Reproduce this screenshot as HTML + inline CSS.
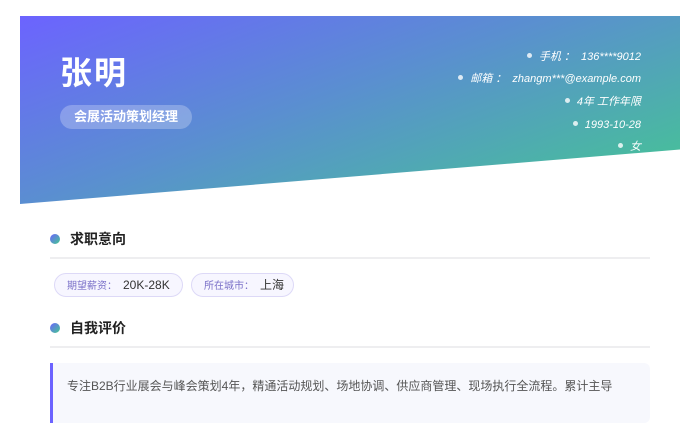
<!DOCTYPE html>
<html><head><meta charset="utf-8"><style>
*{margin:0;padding:0;box-sizing:border-box}
body{width:700px;height:400px;background:#fff;overflow:hidden;position:relative;font-family:"Liberation Sans","Noto Sans CJK SC",sans-serif}
.hd{position:absolute;left:20px;top:16px;width:660px;height:188px;background:linear-gradient(160deg,#6c63ff 0%,#5a8fd0 45%,#43c98f 100%);clip-path:polygon(0 0,100% 0,100% 71%,0 100%)}
.name{position:absolute;left:60px;top:53px;font-size:32px;font-weight:bold;color:#fff;letter-spacing:2px;line-height:40px}
.badge{position:absolute;left:60px;top:105px;width:132px;height:24px;border-radius:12px;background:rgba(255,255,255,.25);color:#fff;font-size:13px;font-weight:bold;line-height:24px;text-align:center}
.ct{position:absolute;right:59px;font-size:11px;font-style:italic;color:#fff;line-height:14px;text-align:right;white-space:nowrap}
.ct:before{content:"";display:inline-block;width:5px;height:5px;border-radius:50%;background:rgba(255,255,255,.8);margin-right:7px;vertical-align:2px}
.sec{position:absolute;left:50px;width:600px;height:30px;border-bottom:2px solid #eeeef0}
.sec i{position:absolute;left:0;top:5px;width:10px;height:10px;border-radius:50%;background:linear-gradient(135deg,#6c63ff,#43c98f)}
.sec b{position:absolute;left:20px;top:1px;font-size:14px;color:#222;line-height:18px}
.tag{position:absolute;top:273px;height:24px;border:1px solid #ddd9f7;background:#f7f6ff;border-radius:12px;line-height:22px;padding-left:12px;white-space:nowrap}
.tag span{font-size:10px;color:#7a70c8}
.tag em{font-style:normal;font-size:12px;color:#333;margin-left:6px}
.q{position:absolute;left:50px;top:363px;width:600px;height:60px;background:#f7f8fd;border-left:3px solid #6c63ff;border-radius:0 6px 6px 0;padding:14px 0 0 14px;font-size:12px;color:#555;white-space:nowrap}
</style></head><body>
<div class="hd"></div>
<div class="name">张明</div>
<div class="badge">会展活动策划经理</div>
<div class="ct" style="top:50px">手机 ：&nbsp; 136****9012</div>
<div class="ct" style="top:72px">邮箱 ：&nbsp; zhangm***@example.com</div>
<div class="ct" style="top:95px">4年 工作年限</div>
<div class="ct" style="top:118px">1993-10-28</div>
<div class="ct" style="top:140px">女</div>
<div class="sec" style="top:229px"><i></i><b>求职意向</b></div>
<div class="tag" style="left:54px;width:129px"><span>期望薪资：</span><em>20K-28K</em></div>
<div class="tag" style="left:191px;width:103px"><span>所在城市：</span><em>上海</em></div>
<div class="sec" style="top:318px"><i></i><b>自我评价</b></div>
<div class="q">专注B2B行业展会与峰会策划4年，精通活动规划、场地协调、供应商管理、现场执行全流程。累计主导</div>
</body></html>
